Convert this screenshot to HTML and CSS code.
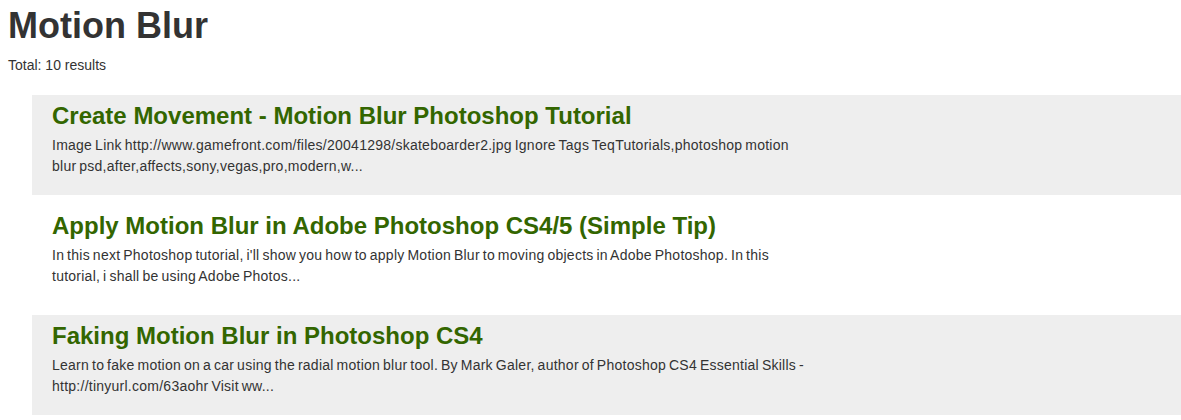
FILE: index.html
```html
<!DOCTYPE html>
<html>
<head>
<meta charset="utf-8">
<title>Motion Blur</title>
<link rel="stylesheet" href="styles.css">
</head>
<body>
<h1 class="page-title">Motion Blur</h1>
<p class="total">Total: 10 results</p>
<ul class="results">
  <li class="result odd">
    <h2 class="result-title"><a href="#">Create Movement - Motion Blur Photoshop Tutorial</a></h2>
    <p class="result-desc">Image Link http://www.gamefront.com/files/20041298/skateboarder2.jpg Ignore Tags TeqTutorials,photoshop motion blur psd,after,affects,sony,vegas,pro,modern,w...</p>
  </li>
  <li class="result">
    <h2 class="result-title"><a href="#">Apply Motion Blur in Adobe Photoshop CS4/5 (Simple Tip)</a></h2>
    <p class="result-desc">In this next Photoshop tutorial, i'll show you how to apply Motion Blur to moving objects in Adobe Photoshop. In this tutorial, i shall be using Adobe Photos...</p>
  </li>
  <li class="result odd">
    <h2 class="result-title"><a href="#">Faking Motion Blur in Photoshop CS4</a></h2>
    <p class="result-desc">Learn to fake motion on a car using the radial motion blur tool. By Mark Galer, author of Photoshop CS4 Essential Skills - http://tinyurl.com/63aohr Visit ww...</p>
  </li>
</ul>
</body>
</html>
```
FILE: styles.css
```css
html, body {
  margin: 0;
  padding: 0;
  background: #fff;
}
body {
  font-family: "Liberation Sans", Arial, Helvetica, sans-serif;
  color: #333;
  padding: 0 0 0 8px;
  overflow-x: hidden;
}
.page-title {
  margin: 6px 0 0;
  font-size: 36px;
  line-height: 40px;
  font-weight: bold;
  color: #333;
}
.total {
  margin: 9px 0 20px;
  font-size: 14px;
  line-height: 20px;
}
.results {
  list-style: none;
  margin: 0;
  padding: 0 0 0 24px;
}
.result {
  height: 100px;
  box-sizing: border-box;
  padding: 7px 20px 0;
  margin-bottom: 10px;
}
.result.odd {
  background: #eee;
}
.result-title {
  margin: 0 0 6px;
  font-size: 24px;
  line-height: 27px;
  font-weight: bold;
}
.result-title a {
  color: #336600;
  text-decoration: none;
}
.result-desc {
  margin: 0;
  max-width: 758px;
  font-size: 14px;
  line-height: 20.5px;
  letter-spacing: 0.25px;
  word-spacing: -1.2px;
  color: #333;
}
```
